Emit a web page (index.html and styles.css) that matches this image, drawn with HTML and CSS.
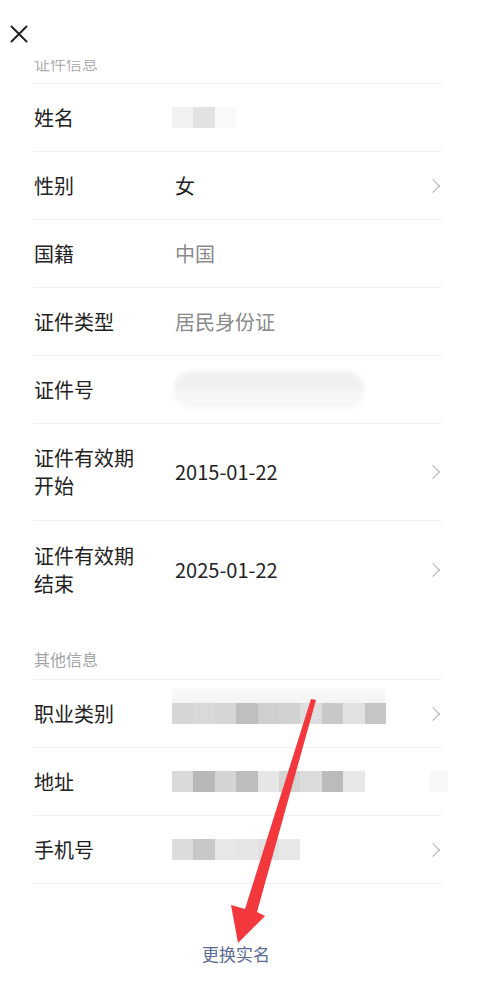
FILE: index.html
```html
<!DOCTYPE html>
<html lang="zh-CN">
<head>
<meta charset="utf-8">
<title>实名信息</title>
<link rel="stylesheet" href="styles.css">
</head>
<body>
<div class="page">
  <header class="topbar">
    <svg class="close" width="18" height="18" viewBox="0 0 18 18"><path d="M1.5 1.5 L16.5 16.5 M16.5 1.5 L1.5 16.5" stroke="#222" stroke-width="2" stroke-linecap="round" fill="none"/></svg>
  </header>
  <main class="content">
    <section class="group">
      <div class="group-title clipped">证件信息</div>
      <div class="row">
        <div class="label">姓名</div>
        <div class="value"><span class="mosaic"><i class="m-f2"></i><i class="m-e2"></i><i class="m-f8"></i></span></div>
      </div>
      <div class="row">
        <div class="label">性别</div>
        <div class="value">女</div>
        <span class="chev"></span>
      </div>
      <div class="row">
        <div class="label">国籍</div>
        <div class="value muted">中国</div>
      </div>
      <div class="row">
        <div class="label">证件类型</div>
        <div class="value muted">居民身份证</div>
      </div>
      <div class="row">
        <div class="label">证件号</div>
        <div class="value"><span class="blur-pill"></span></div>
      </div>
      <div class="row tall">
        <div class="label">证件有效期<br>开始</div>
        <div class="value">2015-01-22</div>
        <span class="chev"></span>
      </div>
      <div class="row tall last">
        <div class="label">证件有效期<br>结束</div>
        <div class="value">2025-01-22</div>
        <span class="chev"></span>
      </div>
    </section>
    <section class="group">
      <div class="group-title spaced">其他信息</div>
      <div class="row">
        <div class="label">职业类别</div>
        <div class="value"><span class="mosaic band"><i class="m-d6"></i><i class="m-d9"></i><i class="m-d6"></i><i class="m-bf"></i><i class="m-cf"></i><i class="m-d2"></i><i class="m-de"></i><i class="m-c8"></i><i class="m-e2"></i><i class="m-c5"></i></span></div>
        <span class="chev"></span>
      </div>
      <div class="row">
        <div class="label">地址</div>
        <div class="value"><span class="mosaic"><i class="m-d9"></i><i class="m-b8"></i><i class="m-d4"></i><i class="m-bd"></i><i class="m-e6"></i><i class="m-d4"></i><i class="m-dc"></i><i class="m-bb"></i><i class="m-e8"></i></span></div>
        <span class="ghost"></span>
      </div>
      <div class="row">
        <div class="label">手机号</div>
        <div class="value"><span class="mosaic"><i class="m-dc"></i><i class="m-c8"></i><i class="m-e8"></i><i class="m-e6"></i><i class="m-e0"></i><i class="m-e8"></i></span></div>
        <span class="chev"></span>
      </div>
    </section>
    <div class="action">更换实名</div>
  </main>
  <svg class="arrow" width="480" height="991" viewBox="0 0 480 991">
    <polygon points="311,699 316,700 257,912 265,916 238,943 231,905 245,909" fill="#f2373d"/>
  </svg>
</div>
</body>
</html>
```

FILE: styles.css
```css
* { box-sizing: border-box; }
html, body { margin: 0; padding: 0; background: #fff; }
body {
  font-family: "Noto Sans CJK SC", "Noto Sans", sans-serif;
  color: #222;
}
.page {
  position: relative;
  width: 480px;
  height: 991px;
  overflow: hidden;
  background: #fff;
}
.topbar {
  height: 60px;
  display: flex;
  align-items: flex-start;
  padding: 25px 0 0 10px;
}
.close { display: block; }
.content {
  overflow: hidden;
  display: flex;
  flex-direction: column;
  padding: 0 38px 0 34px;
}
.group { display: flex; flex-direction: column; }
.group-title {
  font-size: 16px;
  line-height: 20px;
  color: #a3a3a3;
  padding-bottom: 10px;
  border-bottom: 1px solid #f0f0f0;
}
.group-title.clipped { margin-top: -7px; color: #b0b0b0; }
.group-title.spaced { padding-top: 31px; }
.row {
  position: relative;
  display: flex;
  align-items: center;
  height: 68px;
  border-bottom: 1px solid #f0f0f0;
}
.row.tall { height: 97px; }
.row.last { border-bottom: none; }
.label {
  width: 141px;
  flex: none;
  font-size: 20px;
  line-height: 28px;
  color: #222;
}
.value {
  flex: 1;
  font-size: 20px;
  line-height: 28px;
  color: #222;
  display: flex;
  align-items: center;
}
.value.muted { color: #8a8a8a; }
.chev {
  flex: none;
  width: 10px;
  height: 10px;
  margin-right: 4px;
  border-top: 1.6px solid #b0b0b0;
  border-right: 1.6px solid #b0b0b0;
  transform: rotate(45deg);
}
.ghost {
  position: absolute;
  right: -6px;
  top: 23px;
  width: 18px;
  height: 21px;
  background: #f7f7f7;
}
.mosaic { display: flex; height: 21px; margin-left: -3px; }
.mosaic i { display: block; width: 21.4px; height: 21px; }
.mosaic.band { position: relative; }
.mosaic.band::before {
  content: "";
  position: absolute;
  left: 0;
  right: 0;
  top: -15px;
  height: 15px;
  background: linear-gradient(#fbfbfb, #f3f3f3);
}
.blur-pill {
  display: block;
  width: 192px;
  height: 38px;
  margin-left: -2px;
  border-radius: 19px;
  background: linear-gradient(#f0f0f0 0%, #f0f0f0 45%, #f6f6f6 55%, #f8f8f8 100%);
  filter: blur(2px);
}
.m-f2 { background: #f2f2f2; }
.m-e2 { background: #e2e2e2; }
.m-f8 { background: #f9f9f9; }
.m-d6 { background: #d6d6d6; }
.m-d9 { background: #d9d9d9; }
.m-bf { background: #bfbfbf; }
.m-cf { background: #cfcfcf; }
.m-d2 { background: #d2d2d2; }
.m-de { background: #dedede; }
.m-c8 { background: #c8c8c8; }
.m-c5 { background: #c5c5c5; }
.m-b8 { background: #b8b8b8; }
.m-d4 { background: #d4d4d4; }
.m-bd { background: #bdbdbd; }
.m-e6 { background: #e6e6e6; }
.m-dc { background: #dcdcdc; }
.m-bb { background: #bbbbbb; }
.m-e8 { background: #e8e8e8; }
.m-e0 { background: #e0e0e0; }
.action {
  margin-top: 58px;
  align-self: center;
  font-size: 17px;
  line-height: 24px;
  color: #5b6b95;
  margin-left: -4px;
}
.arrow {
  position: absolute;
  left: 0;
  top: 0;
  pointer-events: none;
}
```
